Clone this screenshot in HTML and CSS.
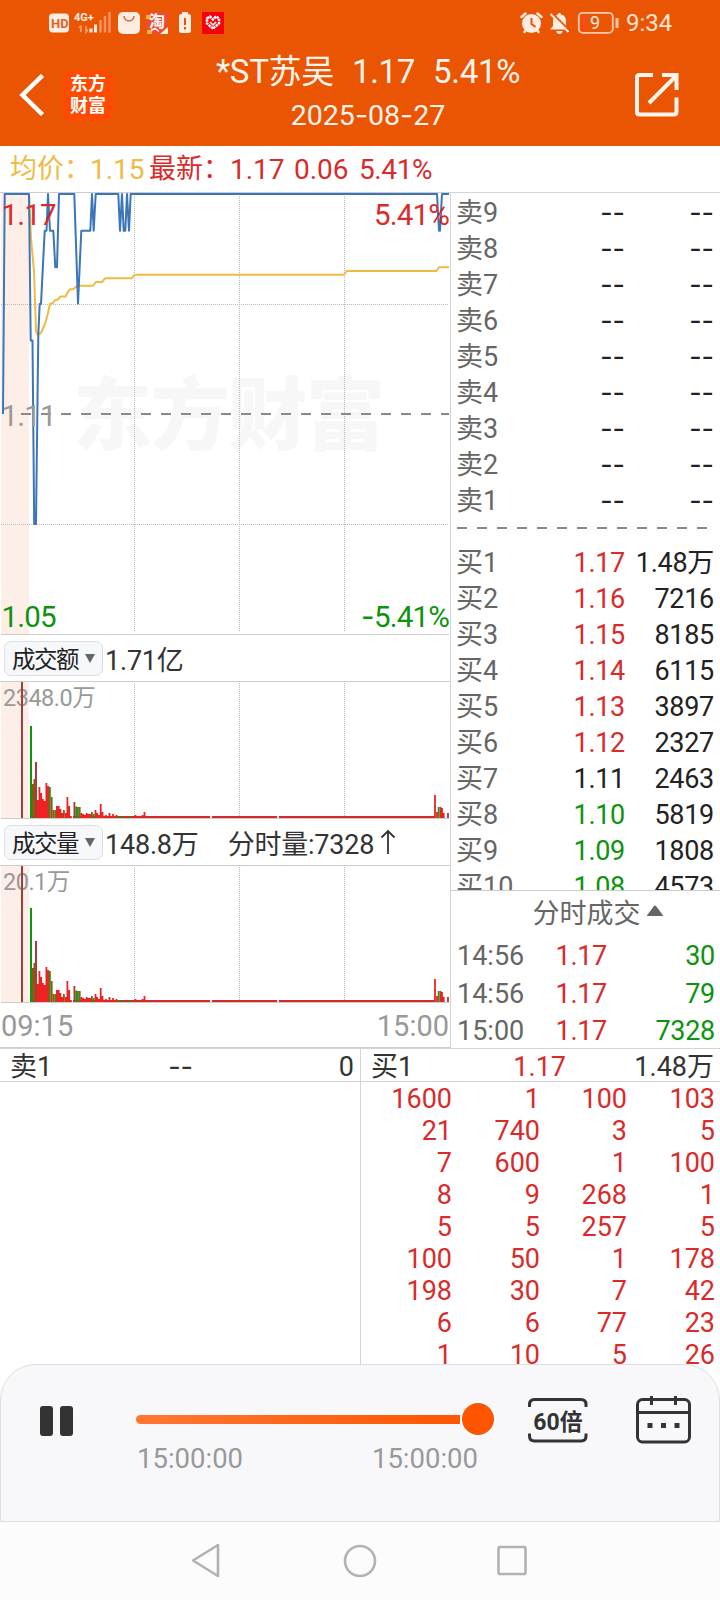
FILE: index.html
```html
<!DOCTYPE html>
<html lang="zh-CN">
  <head>
    <meta charset="UTF-8" />
    <meta name="viewport" content="width=device-width, initial-scale=1.0" />
    <title>*ST苏吴 2025-08-27</title>
    <link rel="stylesheet" href="styles.css">
  </head>
  <body>
    <header>
      <div class="status">
        <svg class="status-left" width="180" height="28" viewBox="48 8 180 28">
          <rect x="49" y="13.500" width="20" height="19" rx="4" fill="#ffece2" />
          <text x="51" y="28" class="s-hd">HD</text>
          <text x="74" y="21" class="s-4g">4G+</text>
          <path d="M81 26v6M79 28l2-2.500M86 26v6l2-2.500" stroke="#f6a276" stroke-width="1.500" fill="none" />
          <path d="M91 28.500v4M95.500 24.500v8" stroke="#ffece2" stroke-width="3" />
          <path d="M100.500 20v12.500M105 16v16.500M109.500 12v20.500" stroke="#f39262" stroke-width="2.500" />
          <rect x="118" y="12" width="22" height="22" rx="5" fill="#ffece2" />
          <path d="M124 16a5 5 0 0 0 10 0" stroke="#d96a35" stroke-width="1.500" fill="none" />
          <rect x="146" y="12" width="22" height="22" fill="#ee4b30" />
          <path d="M146 15h5v4h-5zM147 30h5v4h-5z" fill="#ffb72e" />
          <path d="M160 34l8-7v7z" fill="#fff0dc" />
          <text x="149" y="27" class="s-tao">淘</text>
          <path d="M151 30.500l4-2 4 3" stroke="#fff" stroke-width="1.500" fill="none" />
          <rect x="182" y="12" width="6" height="3" fill="#ffece2" />
          <rect x="179" y="14" width="12" height="19" rx="2.500" fill="#ffece2" />
          <path d="M185 18v7M185 27v2.500" stroke="#e95504" stroke-width="2" />
          <rect x="202" y="12" width="22" height="22" fill="#f5000c" />
          <path d="M213 28.500l-6-5v-5l3-2 3 3 3-3 3 2v5z" fill="none" stroke="#fff" stroke-width="2.500" stroke-dasharray="2.500 .7" />
          <path d="M210 22l3 3 3-3" fill="none" stroke="#fff" stroke-width="1.500" />
        </svg>
        <svg class="status-right" width="100" height="28" viewBox="520 8 100 28">
          <circle cx="531.500" cy="23.500" r="9.500" fill="#ffece2" />
          <path d="M531.500 18v6l4 3" stroke="#e95504" stroke-width="2" fill="none" />
          <path d="M521.500 17l4-3.500M541.500 17l-4-3.500M524.500 32l2-2.500M538.500 32l-2-2.500" stroke="#ffece2" stroke-width="2.500" stroke-linecap="round" />
          <path d="M550 29.500l3-3.500v-5c0-4 3-6 5-6.500 0-2 3-2 3 0 3 .5 5 3 5 6.500v5l3 3.500z" fill="#ffece2" />
          <path d="M556.500 31h6a3 3 0 0 1-6 0z" fill="#ffece2" />
          <path d="M552.500 14l18 18" stroke="#e95504" stroke-width="2.500" />
          <path d="M550.500 14l18 18" stroke="#ffece2" stroke-width="2" />
          <rect x="578.800" y="12.800" width="34" height="20" rx="4" fill="none" stroke="#fcc9ae" stroke-width="1.800" />
          <rect x="581.500" y="15.500" width="3.500" height="14.500" rx="1" fill="#ff4524" />
          <text x="590" y="28.500" class="s-bat">9</text>
          <path d="M617 18v10" stroke="#fcc9ae" stroke-width="3" />
        </svg>
        <span class="clock">9:34</span>
      </div>
      <div class="titlebar">
        <svg class="back" width="26" height="42" viewBox="0 0 26 42">
          <path d="M23.500 1.500L3.500 21l20 19.500" fill="none" stroke="#fff" stroke-width="4.500" />
        </svg>
        <div class="logo">东方<br>财富</div>
        <div class="title">
          <div class="name"><span>*ST苏吴</span><span>1.17</span><span>5.41%</span></div>
          <div class="date">2025<i>-</i>08<i>-</i>27</div>
        </div>
        <svg class="share" width="44" height="44" viewBox="0 0 44 44">
          <path d="M18 2H4.500Q2 2 2 4.500V39q0 2.500 2.500 2.500H39q2.500 0 2.500-2.500V24.500M27 2h14.500v15M41 3L14 30" fill="none" stroke="#fff4ec" stroke-width="4" />
        </svg>
      </div>
    </header>

    <div class="summary">
      <span class="avg-label">均价：</span><span class="avg">1.15</span>
      <span class="last-label">最新：</span><span class="last">1.17</span>
      <span class="chg">0.06</span>
      <span class="pct">5.41%</span>
    </div>

    <main>
      <section class="charts">
        <svg class="chart" width="450" height="443" viewBox="0 0 450 443">
          <rect x="1" y="1" width="28" height="441" fill="#fdeee8" />
          <text x="73" y="252" class="watermark" textLength="312">东方财富</text>
          <path class="grid" d="M134.500 4V440M239.500 4V440M344.500 4V440M1 112.500H449M1 332.500H449" />
          <path d="M21 222H449" stroke="#8a8a8a" stroke-width="2" stroke-dasharray="10 10" />
          <path class="edge" d="M0 .5H450M1 442.500H449" />
          <path class="avg-line" d="M29 2L31 46 34 79 36 139 38 143 41 141 45 132 48 121 50 112 53 111 55 108 58 107.500 60.500 104.500 65.500 104.500 69.500 97.500 73.500 97 77 93.700H93L96 90H102L105 86.300H132L134.500 82.700H344L346.500 79H436.500L439 75.300H449" />
          <path class="price-line" d="M3 222L4.700 2H29L30.700 148.500H32.500L34.200 332H36L38.300 143 39.700 112H41L44.700 38.700H46.500L48 2 50 38.700H53.300L55.300 75.300H57L59 2H74.300L78 111.500 81.300 38.700H90.300L92 2 93.700 38.700 95.700 2H118.300L120 38.700 122 2 123.700 38.700H125.300L127 2 129 38.700 130.700 2H437L439 38.700H440L442 2H449" />
          <text x="1.500" y="33" class="t30 red">1.17</text>
          <text x="449" y="33" class="t30 red end">5.41%</text>
          <text x="1.500" y="233.500" class="t30 gray">1.11</text>
          <text x="1.500" y="434.500" class="t30 green">1.05</text>
          <text x="449" y="434.500" class="t30 green end"><tspan class="dash">-</tspan>5.41%</text>
        </svg>

        <div class="indicator">
          <span class="pick">成交额<b></b></span><span>1.71亿</span>
        </div>
        <svg class="chart" width="450" height="137" viewBox="0 0 450 137">
          <defs>
            <g id="bars" stroke-width="1.800">
              <path stroke="#d62a2a" stroke-width="2" d="M73 135H210M212 135H277M279 135H435" />
              <path stroke="#ee2222" d="M37.700 136v-18M39.400 136v-31M41.200 136v-25M42.900 136v-19M44.700 136v-17M46.400 136v-35M48.200 136v-32M53.400 136v-8M56.900 136v-12M58.700 136v-12M60.400 136v-9M62.200 136v-5M65.700 136v-5M67.400 136v-21M69.200 136v-12M70.900 136v-2M81.400 136v-5M83.200 136v-4M84.900 136v-3M86.700 136v-5M88.400 136v-4M90.200 136v-4M95.500 136v-8M97.200 136v-5M99 136v-3M100.700 136v-14M102.500 136v-6M106 136v-3M109.500 136v-5M113 136v-4M116.500 136v-3M135.500 136v-3M144.500 136v-6M142.500 136v-3M435 136v-23M437 136v-6M440.500 136v-11M442 136v-10M443.700 136v-5" />
              <path stroke="#8d5715" d="M32.700 136v-34M34.400 136v-39M51.700 136v-21M63.900 136v-8M79.700 136v-11M91.900 136v-6" />
              <path stroke="#279010" d="M49.900 136v-31M55.200 136v-8M76.200 136v-11.500M77.900 136v-11M93.700 136v-4M118.500 136v-2M122 136v-2M129 136v-2M438.700 136v-11" />
              <path stroke="#a33c3c" d="M74.400 136v-16M448 136v-5" />
            </g>
          </defs>
          <rect x="1" y="0" width="28" height="136" fill="#fdeee8" />
          <path class="grid" d="M134.500 1V136M239.500 1V136M344.500 1V136" />
          <text x="3" y="24" class="t24 gray">2348.0万</text>
          <path d="M22 0V136" stroke="#9d403c" stroke-width="2" />
          <path d="M31 136v-92" stroke="#0b980b" stroke-width="2" />
          <path d="M36 136v-56" stroke="#a33c3c" stroke-width="2" />
          <use href="#bars" />
          <path class="edge" d="M1 136.500H449" />
        </svg>

        <div class="indicator">
          <span class="pick">成交量<b></b></span><span>148.8万</span><span class="minute">分时量:7328</span><svg width="16" height="26" viewBox="0 0 16 26"><path d="M8 25V2M1.500 8.500L8 2l6.500 6.500" fill="none" stroke="#333" stroke-width="1.800" /></svg>
        </div>
        <svg class="chart" width="450" height="137" viewBox="0 0 450 137">
          <rect x="1" y="0" width="28" height="136" fill="#fdeee8" />
          <path class="grid" d="M134.500 1V136M239.500 1V136M344.500 1V136" />
          <text x="3" y="24" class="t24 gray">20.1万</text>
          <path d="M22 0V136" stroke="#9d403c" stroke-width="2" />
          <path d="M31 136v-94" stroke="#0b980b" stroke-width="2" />
          <path d="M36 136v-61" stroke="#a33c3c" stroke-width="2" />
          <use href="#bars" />
          <path class="edge" d="M1 136.500H449" />
        </svg>
        <div class="times"><span>09:15</span><span>15:00</span></div>
      </section>

      <section class="book">
        <div class="levels">
          <div class="row"><span>卖9</span><i>--</i><i>--</i></div>
          <div class="row"><span>卖8</span><i>--</i><i>--</i></div>
          <div class="row"><span>卖7</span><i>--</i><i>--</i></div>
          <div class="row"><span>卖6</span><i>--</i><i>--</i></div>
          <div class="row"><span>卖5</span><i>--</i><i>--</i></div>
          <div class="row"><span>卖4</span><i>--</i><i>--</i></div>
          <div class="row"><span>卖3</span><i>--</i><i>--</i></div>
          <div class="row"><span>卖2</span><i>--</i><i>--</i></div>
          <div class="row"><span>卖1</span><i>--</i><i>--</i></div>
          <svg class="split" width="264" height="26" viewBox="0 0 264 26"><path d="M6 10H258" stroke="#8a8a8a" stroke-width="2" stroke-dasharray="10 10" /></svg>
          <div class="row"><span>买1</span><em class="red">1.17</em><em>1.48万</em></div>
          <div class="row"><span>买2</span><em class="red">1.16</em><em>7216</em></div>
          <div class="row"><span>买3</span><em class="red">1.15</em><em>8185</em></div>
          <div class="row"><span>买4</span><em class="red">1.14</em><em>6115</em></div>
          <div class="row"><span>买5</span><em class="red">1.13</em><em>3897</em></div>
          <div class="row"><span>买6</span><em class="red">1.12</em><em>2327</em></div>
          <div class="row"><span>买7</span><em>1.11</em><em>2463</em></div>
          <div class="row"><span>买8</span><em class="green">1.10</em><em>5819</em></div>
          <div class="row"><span>买9</span><em class="green">1.09</em><em>1808</em></div>
          <div class="row"><span>买10</span><em class="green">1.08</em><em>4573</em></div>
        </div>
        <div class="ticks">
          <div class="ticks-title">分时成交<svg width="16" height="11" viewBox="0 0 16 11"><path d="M0 11q0-1 1-2L7 1q1-1 2 0l6 8q1 1 1 2z" fill="#666" /></svg></div>
          <div class="tick"><span>14:56</span><em class="red">1.17</em><em class="green">30</em></div>
          <div class="tick"><span>14:56</span><em class="red">1.17</em><em class="green">79</em></div>
          <div class="tick"><span>15:00</span><em class="red">1.17</em><em class="green">7328</em></div>
        </div>
      </section>
    </main>

    <div class="depth">
      <div class="side sell">
        <div class="side-head"><span>卖1</span><i>--</i><em>0</em></div>
      </div>
      <div class="side buy">
        <div class="side-head"><span>买1</span><em class="red">1.17</em><em>1.48万</em></div>
        <div class="orders">
          <span>1600</span><span>1</span><span>100</span><span>103</span>
          <span>21</span><span>740</span><span>3</span><span>5</span>
          <span>7</span><span>600</span><span>1</span><span>100</span>
          <span>8</span><span>9</span><span>268</span><span>1</span>
          <span>5</span><span>5</span><span>257</span><span>5</span>
          <span>100</span><span>50</span><span>1</span><span>178</span>
          <span>198</span><span>30</span><span>7</span><span>42</span>
          <span>6</span><span>6</span><span>77</span><span>23</span>
          <span>1</span><span>10</span><span>5</span><span>26</span>
        </div>
      </div>
    </div>

    <div class="player">
      <div class="pause"><b></b><b></b></div>
      <div class="progress">
        <div class="track"><div class="bar"></div><div class="thumb"></div></div>
        <div class="range"><span>15:00:00</span><span>15:00:00</span></div>
      </div>
      <svg class="speed" width="60" height="46" viewBox="0 0 60 46">
        <path d="M1.500 10V7.500q0-5 5-5H53q5 0 5 5V10M1.500 36.500V39q0 5 5 5H53q5 0 5-5v-2.500" fill="none" stroke="#333" stroke-width="3" />
        <text x="30" y="32.500" text-anchor="middle">60倍</text>
      </svg>
      <svg class="calendar" width="56" height="48" viewBox="0 0 56 48">
        <rect x="1.500" y="3.500" width="52" height="42.500" rx="5" fill="none" stroke="#333" stroke-width="3" />
        <path d="M2 16.500H53M15.500 0V9M39.500 0V9" stroke="#333" stroke-width="3" />
        <path d="M11.500 29.500h5M25 29.500h5M38.500 29.500h5" stroke="#333" stroke-width="5" />
      </svg>
    </div>

    <nav>
      <svg width="336" height="36" viewBox="0 0 336 36">
        <g fill="none" stroke="#b2b2b2" stroke-width="2.600" stroke-linejoin="round">
          <path d="M26 3V34L1 18.500z" />
          <circle cx="168" cy="19" r="15" />
          <rect x="306.500" y="5" width="27" height="27" rx="1" />
        </g>
      </svg>
    </nav>
  </body>
</html>
```
FILE: styles.css
```css
* {
  box-sizing: border-box;
}
body {
  margin: 0;
  width: 720px;
  height: 1600px;
  overflow: hidden;
  background: #fff;
  color: #222;
  font-family: Roboto, "Noto Sans CJK SC", sans-serif;
  font-size: 27px;
}
svg {
  display: block;
  flex: none;
}
i,
em {
  font-style: normal;
}
/* wide hyphens */
i,
.dash {
  font-family: Inter, sans-serif;
}
.red {
  color: #d92b2b;
  fill: #d92b2b;
}
.green {
  color: #0d930d;
  fill: #0d930d;
}
.gray {
  fill: #999;
}

/* header */
header {
  height: 146px;
  background: #ea5504;
  color: #fff4ec;
}
.status {
  display: flex;
  align-items: center;
  height: 46px;
  padding-left: 48px;
}
.status-left,
.status-right {
  margin-top: -2px;
}
.status-right {
  margin-left: 292px;
}
.clock {
  margin-left: 6px;
  font-size: 24px;
  color: #ffe3d4;
}
.s-hd {
  font: bold 13px Roboto, sans-serif;
  fill: #e0622a;
}
.s-4g {
  font: bold 11px Roboto, sans-serif;
  fill: #ffece2;
}
.s-tao {
  font: bold 16px "Noto Sans CJK SC", sans-serif;
  fill: #fff;
}
.s-bat {
  font-size: 18px;
  fill: #ffece2;
}
.titlebar {
  display: flex;
  height: 100px;
}
.back {
  margin: 28px 0 0 19px;
}
.logo {
  width: 50px;
  height: 51px;
  margin: 24px 0 0 18px;
  padding-top: 3px;
  border-radius: 10px;
  background: #ff4a00;
  color: #fff;
  font-size: 18px;
  font-weight: bold;
  line-height: 22px;
  text-align: center;
}
.title {
  width: 400px;
  margin-left: 55px;
  text-align: center;
}
.name {
  display: flex;
  justify-content: center;
  gap: 18px;
  height: 48px;
  font-size: 33px;
  line-height: 52px;
  letter-spacing: -0.3px;
}
.date {
  font-size: 28.500px;
  line-height: 42px;
}
.share {
  margin: 27px 0 0 67px;
}

.summary {
  display: flex;
  height: 46px;
  font-size: 28px;
  line-height: 47px;
  color: #d92b2b;
  white-space: nowrap;
}
.summary .avg-label {
  width: 80px;
  margin-left: 10px;
  font-size: 27px;
}
.summary .last-label {
  width: 81px;
  font-size: 27px;
}
.avg-label,
.avg {
  color: #efbb45;
}
.avg {
  width: 59px;
}
.last {
  width: 64px;
}
.chg {
  width: 65px;
}
.pct {
  letter-spacing: -0.4px;
}

/* charts */
main {
  display: flex;
  height: 856px;
}
.charts {
  width: 450px;
}
.grid {
  fill: none;
  stroke: #bbb;
  stroke-dasharray: 1 1;
}
.edge {
  fill: none;
  stroke: #ccc;
}
.avg-line,
.price-line {
  fill: none;
  stroke: #efbb45;
  stroke-width: 2;
  stroke-linejoin: round;
}
.price-line {
  stroke: #3a76b8;
}
.watermark {
  font-size: 79px;
  font-weight: 900;
  fill: #f7f7f7;
}
.t30 {
  font-size: 29.500px;
  letter-spacing: -0.8px;
}
.t24 {
  font-size: 23.500px;
  letter-spacing: -0.5px;
}
.end {
  text-anchor: end;
}
.indicator {
  display: flex;
  align-items: center;
  height: 47px;
  padding-left: 4px;
  border-bottom: 1px solid #ccc;
  color: #333;
  font-size: 27px;
  letter-spacing: -0.2px;
}
.pick {
  display: flex;
  align-items: center;
  justify-content: space-between;
  width: 99px;
  height: 35px;
  margin-right: 2px;
  padding: 0 7px 0 7px;
  border: 1px solid #dddfe3;
  border-radius: 7px;
  background: #f7f8fb;
  color: #222;
  font-size: 23.500px;
  letter-spacing: -1.500px;
}
.pick b {
  border: 5.500px solid transparent;
  border-top: 9px solid #666;
  border-bottom: 0;
}
.minute {
  margin: 0 6px 0 29px;
}
.times {
  display: flex;
  justify-content: space-between;
  height: 45px;
  padding: 0 1px;
  color: #999;
  font-size: 29px;
  line-height: 47px;
  border-bottom: 1px solid #ccc;
}

/* order book */
.book {
  width: 270px;
  border: 1px solid #d4d4d8;
  border-width: 1px 0 0 1px;
}
.levels {
  height: 697px;
  padding-top: 1px;
  overflow: hidden;
}
.row {
  display: grid;
  grid-template-columns: 60px 109px 89px;
  height: 36px;
  padding-left: 5px;
  line-height: 38px;
  text-align: right;
}
.row em,
.tick em {
  letter-spacing: -0.3px;
}
.row span,
.tick span {
  color: #666;
  text-align: left;
  white-space: nowrap;
}
.row i {
  line-height: 37px;
}
.ticks {
  border-top: 1px solid #ccc;
}
.ticks-title {
  display: flex;
  align-items: center;
  justify-content: center;
  gap: 6px;
  height: 45px;
  padding-left: 24px;
  color: #666;
  line-height: 42px;
}
.ticks-title svg {
  margin-bottom: 7px;
}
.tick {
  display: grid;
  grid-template-columns: 60px 90px 108px;
  height: 37.500px;
  padding-left: 6px;
  line-height: 40px;
  text-align: right;
}

/* order queue */
.depth {
  display: flex;
  height: 316px;
  overflow: hidden;
  border-top: 1px solid #d4d4d4;
}
.side {
  width: 360px;
}
.buy {
  border-left: 1px solid #d4d4d4;
}
.side-head {
  display: grid;
  grid-template-columns: 90px 93px 161px;
  height: 33px;
  padding-left: 10px;
  border-bottom: 1px solid #d4d4d4;
  color: #333;
  line-height: 36px;
  text-align: right;
}
.buy .side-head {
  grid-template-columns: 100px 95px 148px;
}
.side-head span {
  text-align: left;
}
.side-head .red {
  color: #d92b2b;
}
.orders {
  display: grid;
  grid-template-columns: 91px 88px 87px 88px;
  grid-auto-rows: 32px;
  color: #d92b2b;
  line-height: 35px;
  text-align: right;
}

/* player */
.player {
  display: flex;
  height: 158px;
  border: 1px solid #dedede;
  border-radius: 36px 36px 0 0;
  background: #f8f8fb;
}
.pause {
  display: flex;
  gap: 7px;
  margin: 41px 63px 0 39px;
}
.pause b {
  width: 13px;
  height: 30px;
  border-radius: 3px;
  background: #333;
}
.progress {
  width: 360px;
}
.track {
  display: flex;
  align-items: center;
  height: 32px;
  margin-top: 38px;
}
.bar {
  width: 324px;
  height: 9px;
  border-radius: 5px 0 0 5px;
  background: linear-gradient(90deg, #ff7733, #ff5500);
}
.thumb {
  width: 36px;
  height: 36px;
  border: 2px solid #fff;
  border-radius: 50%;
  background: #ff5500;
}
.range {
  display: flex;
  justify-content: space-between;
  padding: 6px 18px 0 1px;
  color: #999;
  font-size: 27.500px;
  line-height: 36px;
}
.speed {
  margin: 32px 0 0 32px;
}
.speed text {
  font-size: 23px;
  font-weight: bold;
  fill: #333;
}
.calendar {
  margin: 31px 0 0 48px;
}

nav {
  display: flex;
  justify-content: center;
  height: 78px;
  padding-top: 20px;
  background: #fcfcfc;
}
```
